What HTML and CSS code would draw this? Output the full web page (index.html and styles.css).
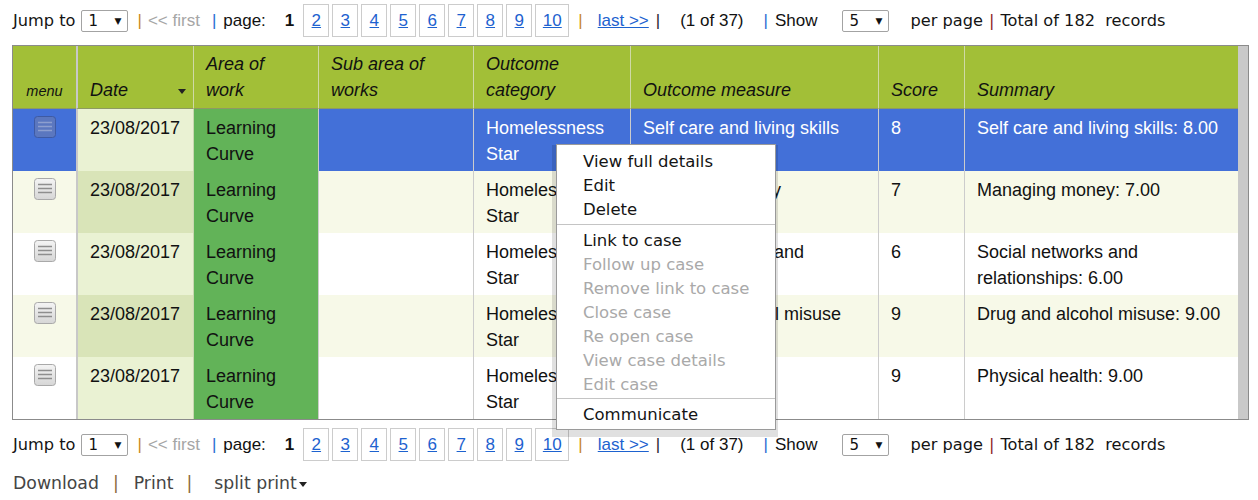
FILE: index.html
```html
<!DOCTYPE html>
<html>
<head>
<meta charset="utf-8">
<link rel="stylesheet" href="styles.css">
</head>
<body>
<div class="page">
  <div class="pager">
    <span class="tah">Jump to</span>
    <span class="sel sel-jump"><span>1</span><span class="caret">&#9660;</span></span>
    <span class="pipe p-orange pp1">|</span>
    <span class="muted pf">&lt;&lt; first</span>
    <span class="pipe p-blue pp2">|</span>
    <span class="plabel">page:</span>
    <span class="cur">1</span>
    <span class="pages">
      <a class="pg" href="#">2</a><a class="pg" href="#">3</a><a class="pg" href="#">4</a><a class="pg" href="#">5</a><a class="pg" href="#">6</a><a class="pg" href="#">7</a><a class="pg" href="#">8</a><a class="pg" href="#">9</a><a class="pg pg-wide" href="#">10</a>
    </span>
    <span class="pipe p-orange pp3">|</span>
    <a class="lnk pl" href="#">last &gt;&gt;</a>
    <span class="pipe p-dark pp4">|</span>
    <span class="pc">(1 of 37)</span>
    <span class="pipe p-blue pp5">|</span>
    <span class="ps">Show</span>
    <span class="sel sel-show"><span>5</span><span class="caret">&#9660;</span></span>
    <span class="tah ppg">per page</span>
    <span class="tah pipe-t p-red">|</span>
    <span class="tah total">Total of 182&nbsp; records</span>
  </div>

  <div class="grid-wrap">
    <table class="grid">
      <colgroup>
        <col class="c-menu"><col class="c-date"><col class="c-area"><col class="c-sub"><col class="c-cat"><col class="c-meas"><col class="c-score"><col class="c-sum">
      </colgroup>
      <thead>
        <tr>
          <th class="h-menu">menu</th>
          <th class="h-date"><div class="h-date-in"><span>Date</span><span class="sort"></span></div></th>
          <th>Area of<br>work</th>
          <th>Sub area of<br>works</th>
          <th>Outcome<br>category</th>
          <th>Outcome measure</th>
          <th>Score</th>
          <th>Summary</th>
        </tr>
      </thead>
      <tbody>
        <tr class="selected">
          <td class="menu-cell"><span class="ham"><svg width="22" height="22" viewBox="0 0 22 22"><rect x="0.5" y="0.5" width="21" height="21" rx="3" fill="#5b77bf" stroke="#3e5aa3"/><path d="M4 6.5h14M4 10.5h14M4 14.5h14" stroke="#8d9fcf" stroke-width="1.6"/></svg></span></td>
          <td class="date">23/08/2017</td>
          <td class="area">Learning Curve</td>
          <td></td>
          <td>Homelessness Star</td>
          <td>Self care and living skills</td>
          <td>8</td>
          <td>Self care and living skills: 8.00</td>
        </tr>
        <tr class="alt">
          <td class="menu-cell"><span class="ham"><svg width="22" height="22" viewBox="0 0 22 22"><defs><linearGradient id="g1" x1="0" y1="0" x2="0" y2="1"><stop offset="0" stop-color="#f4f4f4"/><stop offset="1" stop-color="#d6d6d6"/></linearGradient></defs><rect x="0.5" y="0.5" width="21" height="21" rx="3" fill="url(#g1)" stroke="#a9a9a9"/><path d="M4 6.5h14M4 10.5h14M4 14.5h14" stroke="#8e8e8e" stroke-width="1.6"/></svg></span></td>
          <td class="date">23/08/2017</td>
          <td class="area">Learning Curve</td>
          <td></td>
          <td>Homelessness Star</td>
          <td>Managing money</td>
          <td>7</td>
          <td>Managing money: 7.00</td>
        </tr>
        <tr>
          <td class="menu-cell"><span class="ham"><svg width="22" height="22" viewBox="0 0 22 22"><rect x="0.5" y="0.5" width="21" height="21" rx="3" fill="url(#g1)" stroke="#a9a9a9"/><path d="M4 6.5h14M4 10.5h14M4 14.5h14" stroke="#8e8e8e" stroke-width="1.6"/></svg></span></td>
          <td class="date">23/08/2017</td>
          <td class="area">Learning Curve</td>
          <td></td>
          <td>Homelessness Star</td>
          <td>Social networks and relationships</td>
          <td>6</td>
          <td>Social networks and relationships: 6.00</td>
        </tr>
        <tr class="alt">
          <td class="menu-cell"><span class="ham"><svg width="22" height="22" viewBox="0 0 22 22"><rect x="0.5" y="0.5" width="21" height="21" rx="3" fill="url(#g1)" stroke="#a9a9a9"/><path d="M4 6.5h14M4 10.5h14M4 14.5h14" stroke="#8e8e8e" stroke-width="1.6"/></svg></span></td>
          <td class="date">23/08/2017</td>
          <td class="area">Learning Curve</td>
          <td></td>
          <td>Homelessness Star</td>
          <td>Drug and alcohol misuse</td>
          <td>9</td>
          <td>Drug and alcohol misuse: 9.00</td>
        </tr>
        <tr>
          <td class="menu-cell"><span class="ham"><svg width="22" height="22" viewBox="0 0 22 22"><rect x="0.5" y="0.5" width="21" height="21" rx="3" fill="url(#g1)" stroke="#a9a9a9"/><path d="M4 6.5h14M4 10.5h14M4 14.5h14" stroke="#8e8e8e" stroke-width="1.6"/></svg></span></td>
          <td class="date">23/08/2017</td>
          <td class="area">Learning Curve</td>
          <td></td>
          <td>Homelessness Star</td>
          <td>Physical health</td>
          <td>9</td>
          <td>Physical health: 9.00</td>
        </tr>
      </tbody>
    </table>
    <div class="vscroll"></div>
  </div>

  <div class="pager pager-bottom">
    <span class="tah">Jump to</span>
    <span class="sel sel-jump"><span>1</span><span class="caret">&#9660;</span></span>
    <span class="pipe p-orange pp1">|</span>
    <span class="muted pf">&lt;&lt; first</span>
    <span class="pipe p-blue pp2">|</span>
    <span class="plabel">page:</span>
    <span class="cur">1</span>
    <span class="pages">
      <a class="pg" href="#">2</a><a class="pg" href="#">3</a><a class="pg" href="#">4</a><a class="pg" href="#">5</a><a class="pg" href="#">6</a><a class="pg" href="#">7</a><a class="pg" href="#">8</a><a class="pg" href="#">9</a><a class="pg pg-wide" href="#">10</a>
    </span>
    <span class="pipe p-orange pp3">|</span>
    <a class="lnk pl" href="#">last &gt;&gt;</a>
    <span class="pipe p-dark pp4">|</span>
    <span class="pc">(1 of 37)</span>
    <span class="pipe p-blue pp5">|</span>
    <span class="ps">Show</span>
    <span class="sel sel-show"><span>5</span><span class="caret">&#9660;</span></span>
    <span class="tah ppg">per page</span>
    <span class="tah pipe-t p-red">|</span>
    <span class="tah total">Total of 182&nbsp; records</span>
  </div>

  <div class="actions">
    <span>Download</span>
    <span class="apipe a1">|</span>
    <span class="a2">Print</span>
    <span class="apipe a3">|</span>
    <span class="a4">split print<span class="drop"></span></span>
  </div>

  <div class="ctx-menu">
    <div class="ctx-item">View full details</div>
    <div class="ctx-item">Edit</div>
    <div class="ctx-item">Delete</div>
    <div class="ctx-sep"></div>
    <div class="ctx-item">Link to case</div>
    <div class="ctx-item off">Follow up case</div>
    <div class="ctx-item off">Remove link to case</div>
    <div class="ctx-item off">Close case</div>
    <div class="ctx-item off">Re open case</div>
    <div class="ctx-item off">View case details</div>
    <div class="ctx-item off">Edit case</div>
    <div class="ctx-sep ctx-sep2"></div>
    <div class="ctx-item">Communicate</div>
  </div>
</div>
</body>
</html>
```

FILE: styles.css
```css
html, body {
  margin: 0;
  padding: 0;
  background: #ffffff;
}

.page {
  position: relative;
  padding: 3px 0 0 13px;
  font-family: "Liberation Sans", Arial, sans-serif;
  font-size: 17px;
  color: #111;
}

/* ---------- pager ---------- */
.pager {
  display: flex;
  align-items: center;
  height: 33px;
  padding-top: 1px;
  white-space: nowrap;
}

.tah {
  font-family: "DejaVu Sans", Verdana, sans-serif;
  font-size: 16.2px;
  color: #141414;
}

.sel {
  display: inline-flex;
  align-items: center;
  justify-content: space-between;
  box-sizing: border-box;
  width: 47px;
  height: 22px;
  border: 1px solid #a3a3a3;
  border-radius: 2px;
  padding: 0 6px 0 6px;
  font-family: "DejaVu Sans", Verdana, sans-serif;
  font-size: 15px;
  color: #111;
  background: #fff;
}
.sel-jump { margin-left: 6px; }
.sel-show { margin-left: 25px; }
.caret { font-size: 9px; margin-top: 1px; }

.pipe { color: #333; }
.p-orange { color: #c8891f; }
.p-blue { color: #2a6ed2; }
.p-dark { color: #1f1f33; }
.p-red { color: #8a1c1c; }

.muted { color: #a6a6a6; }

.pp1 { margin-left: 9px; }
.pf { margin-left: 6px; }
.pp2 { margin-left: 12px; }
.plabel { margin-left: 7px; }
.pp3 { margin-left: 9px; }
.pl { margin-left: 15px; }
.pp4 { margin-left: 7px; }
.pc { margin-left: 20px; }
.pp5 { margin-left: 20px; }
.ps { margin-left: 7px; }
.ppg { margin-left: 21px; }

.cur {
  font-weight: bold;
  margin-left: 19px;
}

.pages {
  display: flex;
  gap: 3px;
  margin-left: 9px;
}
.pg {
  display: flex;
  align-items: center;
  justify-content: center;
  box-sizing: border-box;
  width: 26px;
  height: 33px;
  border: 1px solid #cccccc;
  color: #1d62cf;
  text-decoration: underline;
}
.pg-wide { width: 34px; }

.lnk {
  color: #1d62cf;
  text-decoration: underline;
}

.pipe-t { margin-left: 6px; }
.total { margin-left: 6px; }

/* ---------- grid ---------- */
.grid-wrap {
  display: flex;
  margin: 8px 0 0 -1px;
  width: 1237px;
  box-sizing: border-box;
  border: 1px solid #8b8b8b;
}

.vscroll {
  width: 10px;
  flex: none;
  background: #c9c9c9;
}

.grid {
  width: 1225px;
  table-layout: fixed;
  border-collapse: separate;
  border-spacing: 0;
  font-family: "Liberation Sans", Arial, sans-serif;
  font-size: 18px;
  line-height: 26px;
  color: #111;
}

.c-menu { width: 63px; }
.c-date { width: 117px; }
.c-area { width: 125px; }
.c-sub { width: 155px; }
.c-cat { width: 157px; }
.c-meas { width: 248px; }
.c-score { width: 86px; }
.c-sum { width: 274px; }

.grid th {
  height: 56px;
  background: #a2bf37;
  font-weight: normal;
  font-style: italic;
  text-align: left;
  vertical-align: bottom;
  padding: 1px 8px 5px 12px;
  border-left: 1px solid #cfd9a6;
  border-bottom: 1px solid #8e9a63;
}
.grid th.h-menu {
  border-left: none;
  text-align: center;
  font-size: 14.5px;
  padding: 1px 0 4px 0;
}
.grid th.h-date {
  border-left: 2px solid #c8c8c8;
  padding-right: 7px;
}
.h-date-in {
  display: flex;
  align-items: center;
  justify-content: space-between;
}
.sort {
  width: 0;
  height: 0;
  border-left: 4px solid transparent;
  border-right: 4px solid transparent;
  border-top: 5px solid #222;
  margin-top: 3px;
}

.grid td {
  height: 52px;
  padding: 6px 10px 4px 12px;
  vertical-align: top;
  border-left: 1px solid #cccccc;
  background: #ffffff;
}
.grid tr.alt td { background: #f7f9e8; }

.grid td.menu-cell {
  border-left: none;
  text-align: center;
  padding: 7px 0 0 0;
  height: 55px;
}
.ham {
  display: inline-block;
  width: 22px;
  height: 22px;
}
.ham svg { display: block; }

.grid td.date {
  border-left: 2px solid #c8c8c8;
  background: #eaf2d3;
}
.grid tr.alt td.date { background: #d9e4b8; }

.grid td.area,
.grid tr.alt td.area {
  background: #62b358;
  border-left-color: #c8d8b0;
}

.grid tr.selected td { background: #4370d8; color: #fff; }
.grid tr.selected td.date { background: #eaf2d3; color: #111; }
.grid tr.selected td.area { background: #62b358; color: #111; }

/* ---------- bottom ---------- */
.pager-bottom { margin-top: 7px; }

.actions {
  display: flex;
  align-items: center;
  height: 24px;
  margin-top: 10px;
  font-family: "DejaVu Sans", Verdana, sans-serif;
  font-size: 17.3px;
  color: #454545;
  white-space: nowrap;
}
.apipe { color: #8a6a3a; }
.a1 { margin-left: 14px; }
.a2 { margin-left: 15px; }
.a3 { margin-left: 13px; }
.a4 { margin-left: 22px; display: inline-flex; align-items: center; }
.drop {
  width: 0;
  height: 0;
  border-left: 4.5px solid transparent;
  border-right: 4.5px solid transparent;
  border-top: 5px solid #222;
  margin-left: 2px;
  margin-top: 2px;
}

/* ---------- context menu ---------- */
.ctx-menu {
  position: absolute;
  left: 556px;
  top: 144px;
  width: 220px;
  box-sizing: border-box;
  padding: 5px 0 2px 0;
  background: #fff;
  border: 1px solid #9a9a9a;
  box-shadow: -1px 4px 0 3px rgba(0, 0, 0, 0.12);
  font-family: "DejaVu Sans", Verdana, sans-serif;
  font-size: 16.5px;
  color: #141414;
}
.ctx-item {
  height: 24px;
  line-height: 24px;
  padding-left: 26px;
  white-space: nowrap;
}
.ctx-item.off { color: #a9a9a9; }
.ctx-sep {
  height: 1px;
  background: #c4c4c4;
  margin: 2px 0 4px 0;
}
.ctx-sep.ctx-sep2 { margin: 1px 0 4px 0; }
```
